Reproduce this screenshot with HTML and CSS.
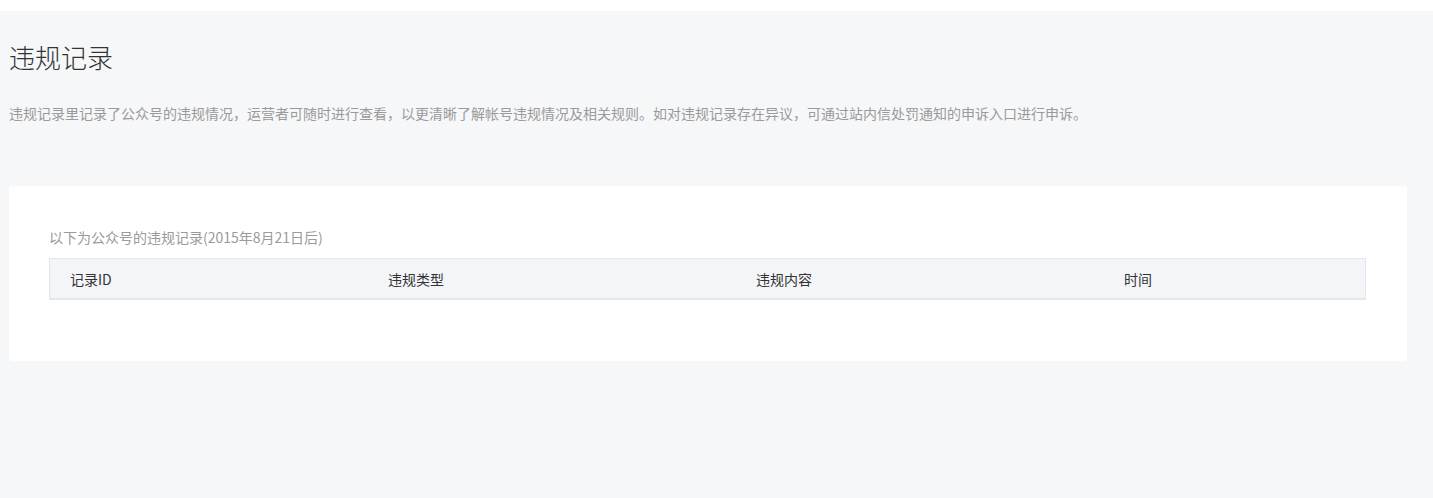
FILE: index.html
```html
<!DOCTYPE html>
<html lang="zh-CN">
<head>
  <meta charset="UTF-8" />
  <meta name="viewport" content="width=device-width, initial-scale=1.0"/>
  <title>违规记录</title>
  <link rel="stylesheet" href="styles.css">
</head>
<body>
  <div class="topbar"></div>

  <div class="main">
    <h1 class="page-title">违规记录</h1>
    <p class="page-desc">违规记录里记录了公众号的违规情况，运营者可随时进行查看，以更清晰了解帐号违规情况及相关规则。如对违规记录存在异议，可通过站内信处罚通知的申诉入口进行申诉。</p>

    <div class="card">
      <p class="caption">以下为公众号的违规记录(2015年8月21日后)</p>
      <table class="record-table">
        <thead>
          <tr>
            <th class="col-id">记录ID</th>
            <th class="col-type">违规类型</th>
            <th class="col-content">违规内容</th>
            <th class="col-time">时间</th>
          </tr>
        </thead>
        <tbody></tbody>
      </table>
    </div>
  </div>
</body>
</html>
```

FILE: styles.css
```css
html, body {
  margin: 0;
  padding: 0;
}
body {
  font-family: "Noto Sans CJK SC", "Noto Sans", sans-serif;
  background-color: #ffffff;
  color: #333;
  width: 1433px;
  height: 498px;
  overflow: hidden;
}
.topbar {
  height: 11px;
  background-color: #ffffff;
}
.main {
  background-color: #f6f7f9;
  height: 487px;
  padding: 28px 26px 0 9px;
  box-sizing: border-box;
}
.page-title {
  margin: 0;
  font-size: 26px;
  font-weight: 300;
  line-height: 36px;
  color: #333;
}
.page-desc {
  margin: 28px 0 0;
  font-size: 14px;
  line-height: 20px;
  color: #9a9a9a;
}
.card {
  margin-top: 63px;
  background-color: #ffffff;
  border-radius: 3px;
  padding: 41px 41px 61px 40px;
}
.caption {
  margin: 0 0 11px;
  font-size: 14px;
  line-height: 20px;
  color: #9a9a9a;
}
.record-table {
  width: 100%;
  border-collapse: collapse;
  table-layout: fixed;
}
.record-table th {
  background-color: #f4f5f9;
  border-top: 1px solid #e4e6eb;
  border-bottom: 2px solid #e4e6eb;
  height: 39px;
  padding: 0 20px;
  text-align: left;
  font-weight: normal;
  font-size: 14px;
  color: #333;
}
.record-table th.col-id {
  border-left: 1px solid #e4e6eb;
  width: 278px;
}
.record-table th.col-type { width: 328px; }
.record-table th.col-content { width: 328px; }
.record-table th.col-time {
  border-right: 1px solid #e4e6eb;
}
```
